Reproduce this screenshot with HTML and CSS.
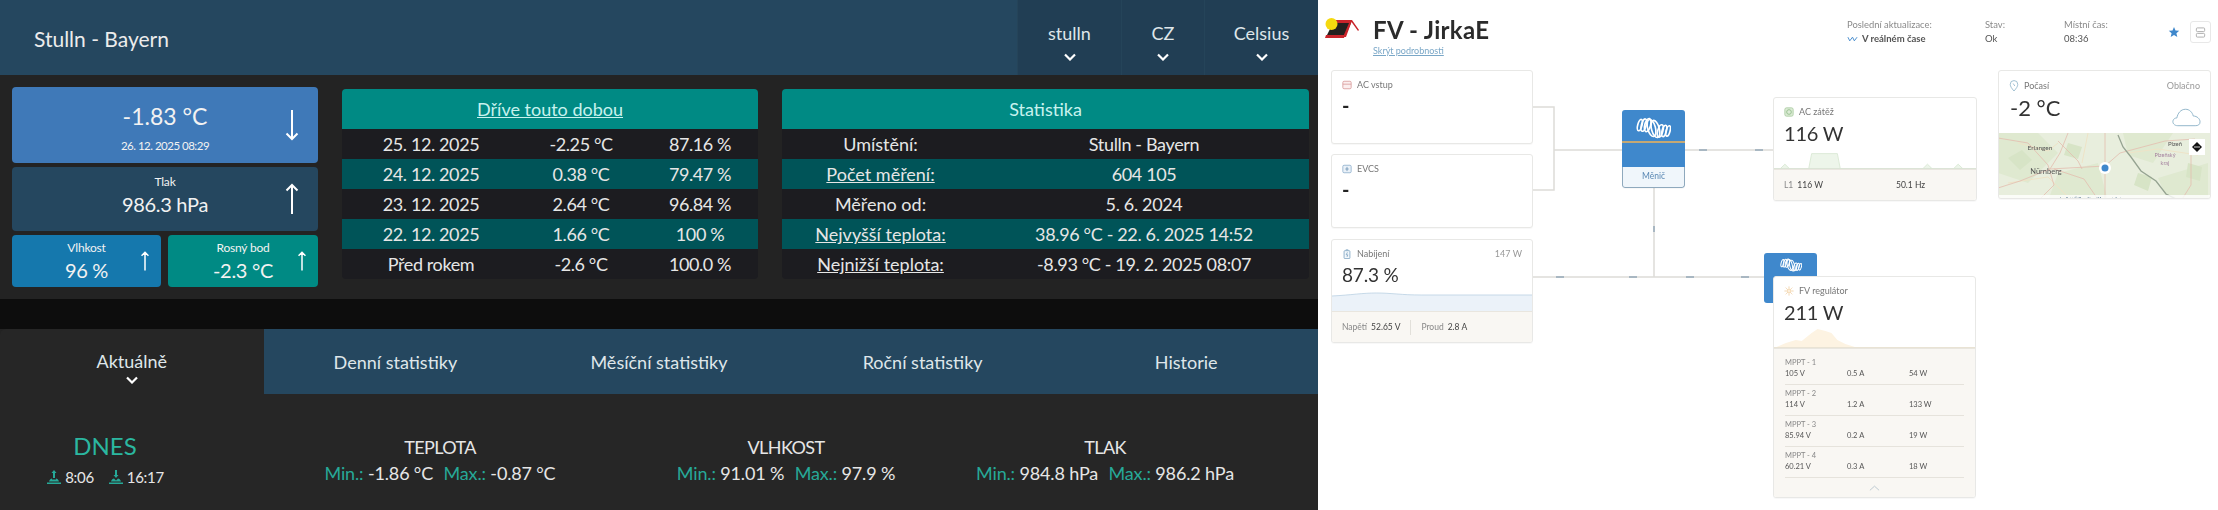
FILE: index.html
```html
<!DOCTYPE html>
<html lang="cs">
<head>
<meta charset="utf-8">
<title>Stulln - Bayern / FV - JirkaE</title>
<link rel="stylesheet" href="styles.css">
</head>
<body>
<div class="page">
  <section class="meteo">
    <header class="top">
      <div class="place">Stulln - Bayern</div>
      <nav class="picks">
        <div class="pick p1">stulln<svg class="chev" viewBox="0 0 12 8"><path d="M1 1.500 6 6.500l5-5"/></svg></div>
        <div class="pick p2">CZ<svg class="chev" viewBox="0 0 12 8"><path d="M1 1.500 6 6.500l5-5"/></svg></div>
        <div class="pick p3">Celsius<svg class="chev" viewBox="0 0 12 8"><path d="M1 1.500 6 6.500l5-5"/></svg></div>
      </nav>
    </header>
    <main class="dash">
      <div class="now">
        <div class="tile temp">
          <div class="tile-text"><div class="big">-1.83 °C</div><div class="date">26. 12. 2025 08:29</div></div>
          <svg class="arrow" viewBox="0 0 14 32"><path d="M7 1v29M1.500 24.500 7 30l5.500-5.500"/></svg>
        </div>
        <div class="tile press">
          <div class="tile-text"><div class="lab">Tlak</div><div class="val">986.3 hPa</div></div>
          <svg class="arrow" viewBox="0 0 14 32"><path d="M7 31V2M1.500 7.500 7 2l5.500 5.500"/></svg>
        </div>
        <div class="tile hum">
          <div class="tile-text"><div class="lab">Vlhkost</div><div class="val">96 %</div></div>
          <svg class="arrow small" viewBox="0 0 14 32"><path d="M7 31V2M1.500 7.500 7 2l5.500 5.500"/></svg>
        </div>
        <div class="tile dew">
          <div class="tile-text"><div class="lab">Rosný bod</div><div class="val">-2.3 °C</div></div>
          <svg class="arrow small" viewBox="0 0 14 32"><path d="M7 31V2M1.500 7.500 7 2l5.500 5.500"/></svg>
        </div>
      </div>
      <table class="grid past">
        <colgroup><col class="c-date"><col class="c-temp"><col class="c-hum"></colgroup>
        <thead><tr><th colspan="3"><u>Dříve touto dobou</u></th></tr></thead>
        <tbody>
          <tr><td>25. 12. 2025</td><td>-2.25 °C</td><td>87.16 %</td></tr>
          <tr><td>24. 12. 2025</td><td>0.38 °C</td><td>79.47 %</td></tr>
          <tr><td>23. 12. 2025</td><td>2.64 °C</td><td>96.84 %</td></tr>
          <tr><td>22. 12. 2025</td><td>1.66 °C</td><td>100 %</td></tr>
          <tr><td>Před rokem</td><td>-2.6 °C</td><td>100.0 %</td></tr>
        </tbody>
      </table>
      <table class="grid stat">
        <colgroup><col class="c-key"><col></colgroup>
        <thead><tr><th colspan="2">Statistika</th></tr></thead>
        <tbody>
          <tr><td>Umístění:</td><td>Stulln - Bayern</td></tr>
          <tr><td><u>Počet měření:</u></td><td>604 105</td></tr>
          <tr><td>Měřeno od:</td><td>5. 6. 2024</td></tr>
          <tr><td><u>Nejvyšší teplota:</u></td><td>38.96 °C - 22. 6. 2025 14:52</td></tr>
          <tr><td><u>Nejnižší teplota:</u></td><td>-8.93 °C - 19. 2. 2025 08:07</td></tr>
        </tbody>
      </table>
    </main>
    <div class="gap"></div>
    <section class="panel">
      <nav class="tabs">
        <div class="tab active">Aktuálně<svg class="chev" viewBox="0 0 12 8"><path d="M1 1.500 6 6.500l5-5"/></svg></div>
        <div class="tab">Denní statistiky</div>
        <div class="tab">Měsíční statistiky</div>
        <div class="tab">Roční statistiky</div>
        <div class="tab">Historie</div>
      </nav>
      <div class="today">
        <div class="col day">
          <div class="dnes">DNES</div>
          <div class="sun">
            <svg class="sunico" viewBox="0 0 16 16"><path d="M8 1 5.500 4H7v5h2V4h1.500zM1 15h14v-1.500H1zM3 12.500h10C12.500 10.500 11 9.500 10 9.500v1H6v-1C5 9.500 3.500 10.500 3 12.500z"/></svg><span>8:06</span>
            <svg class="sunico" viewBox="0 0 16 16"><path d="M8 9 5.500 6H7V1h2v5h1.500zM1 15h14v-1.500H1zM3 12.500h10C12.500 10.500 11 9.500 10 9.500L8 11.500 6 9.500C5 9.500 3.500 10.500 3 12.500z"/></svg><span>16:17</span>
          </div>
        </div>
        <div class="col"><div class="head">TEPLOTA</div><div class="mm"><b>Min.:</b> -1.86 °C <b class="mx">Max.:</b> -0.87 °C</div></div>
        <div class="col"><div class="head">VLHKOST</div><div class="mm"><b>Min.:</b> 91.01 % <b class="mx">Max.:</b> 97.9 %</div></div>
        <div class="col"><div class="head">TLAK</div><div class="mm"><b>Min.:</b> 984.8 hPa <b class="mx">Max.:</b> 986.2 hPa</div></div>
      </div>
    </section>
  </section>

  <section class="fv">
    <header class="fvtop">
      <svg class="logo" viewBox="0 0 34 22">
        <path d="M8 6h18l-6 14H1z" fill="#23201f"/>
        <path d="M6 3h21l7 10-1 1-6.500-9L21 20H18l6-14H8z" fill="#c8242b"/>
        <path d="M1 18h19l-1 3H0z" fill="#c8242b"/>
        <circle cx="6.500" cy="7" r="6" fill="#f5d90f"/>
      </svg>
      <div class="brand"><h1>FV - JirkaE</h1><a class="more">Skrýt podrobnosti</a></div>
      <div class="info"><span>Poslední aktualizace:</span><strong><svg class="wave" viewBox="0 0 12 6"><path d="M1 1l2 4 3-4 2 4 3-4"/></svg>V reálném čase</strong></div>
      <div class="info"><span>Stav:</span><strong>Ok</strong></div>
      <div class="info"><span>Místní čas:</span><strong>08:36</strong></div>
      <svg class="star" viewBox="0 0 24 24"><path d="M12 2l3 7 7.500.6-5.700 4.900 1.800 7.500L12 18l-6.600 4 1.800-7.500L1.500 9.600 9 9z"/></svg>
      <div class="tool"><svg viewBox="0 0 12 12"><rect x="1.500" y="1" width="9" height="4" rx="1"/><rect x="1.500" y="7" width="9" height="4" rx="1"/></svg></div>
    </header>

    <svg class="wires" viewBox="0 0 900 510">
      <path class="w" d="M215 107h21v83h-21"/>
      <path class="w" d="M236 150h68M367 150h88"/>
      <path class="w" d="M336 188v89M215 277h231"/>
      <path class="d" d="M381 150h8M437 150h8M336 226v6M238 277h8M311 277h8M368 277h8M423 277h8"/>
    </svg>

    <article class="node ac-in">
      <div class="chead"><svg class="ico" viewBox="0 0 12 12"><rect x="1" y="1.500" width="10" height="9" rx="1.500" fill="#fbeeee" stroke="#d99a9a"/><path d="M1 5h10" stroke="#d99a9a"/></svg>AC vstup</div>
      <div class="dash-val">-</div>
    </article>
    <article class="node evcs">
      <div class="chead"><svg class="ico" viewBox="0 0 12 12"><rect x="1" y="1.500" width="10" height="9" rx="1.500" fill="#eaf1f8" stroke="#8fb0cc"/><path d="M6 3.500v5M4 6h4" stroke="#6c93b4"/></svg>EVCS</div>
      <div class="dash-val">-</div>
    </article>
    <article class="node batt">
      <div class="chead"><svg class="ico" viewBox="0 0 12 12"><rect x="2.500" y="2" width="7" height="9.500" rx="1" fill="#f2f7fb" stroke="#7fa5c3"/><path d="M4.500 1h3M6.500 4 5 7h2l-1 2.500" stroke="#7fa5c3" fill="none"/></svg>Nabíjení<span class="aside">147 W</span></div>
      <div class="cval">87.3 %</div>
      <svg class="spark" viewBox="0 0 202 24" preserveAspectRatio="none"><path d="M0 9C20 8 30 6 45 6 60 6 70 8 90 8H202V24H0z" fill="#ebf2f9" stroke="none"/><path d="M0 9C20 8 30 6 45 6 60 6 70 8 90 8H202" fill="none" stroke="#c6d9e8"/></svg>
      <div class="foot row">
        <span class="k">Napětí</span><span class="v">52.65 V</span><i class="sep"></i><span class="k">Proud</span><span class="v">2.8 A</span>
      </div>
    </article>

    <article class="node inverter">
      <div class="inv-top">
        <svg class="coil" viewBox="0 0 36 22"><g fill="none" stroke="#fff" stroke-width="1.700"><ellipse cx="4" cy="8" rx="2.200" ry="6" transform="rotate(15 4 8)"/><ellipse cx="8" cy="8" rx="2.400" ry="6.500" transform="rotate(15 8 8)"/><ellipse cx="12" cy="8" rx="3" ry="7" transform="rotate(15 12 8)"/><ellipse cx="16" cy="11" rx="4" ry="9" transform="rotate(-15 16 11)"/><ellipse cx="20" cy="12" rx="4" ry="9" transform="rotate(-15 20 12)"/><ellipse cx="25" cy="14" rx="2.600" ry="6.500" transform="rotate(15 25 14)"/><ellipse cx="29" cy="14" rx="2.200" ry="6" transform="rotate(15 29 14)"/><ellipse cx="33" cy="14" rx="2" ry="5.500" transform="rotate(15 33 14)"/></g></svg>
        <div class="ac-bar"></div>
      </div>
      <div class="inv-name">Měnič</div>
    </article>

    <div class="node-back mppt">
      <svg class="coil small" viewBox="0 0 36 22"><g fill="none" stroke="#fff" stroke-width="1.700"><ellipse cx="4" cy="8" rx="2.200" ry="6" transform="rotate(15 4 8)"/><ellipse cx="8" cy="8" rx="2.400" ry="6.500" transform="rotate(15 8 8)"/><ellipse cx="12" cy="8" rx="3" ry="7" transform="rotate(15 12 8)"/><ellipse cx="16" cy="11" rx="4" ry="9" transform="rotate(-15 16 11)"/><ellipse cx="20" cy="12" rx="4" ry="9" transform="rotate(-15 20 12)"/><ellipse cx="25" cy="14" rx="2.600" ry="6.500" transform="rotate(15 25 14)"/><ellipse cx="29" cy="14" rx="2.200" ry="6" transform="rotate(15 29 14)"/><ellipse cx="33" cy="14" rx="2" ry="5.500" transform="rotate(15 33 14)"/></g></svg>
    </div>

    <article class="node load">
      <div class="chead"><svg class="ico" viewBox="0 0 12 12"><rect x="1" y="1" width="10" height="10" rx="2" fill="#dcebd6" stroke="#a8cba0"/><circle cx="6" cy="6" r="2.800" fill="none" stroke="#8dbb84"/></svg>AC zátěž</div>
      <div class="cval">116 W</div>
      <svg class="spark" viewBox="0 0 204 25" preserveAspectRatio="none"><path d="M6 25l5-5 5 5zM35 25l3-16h26l3 16zM150 25l5-5 5 5zM181 25l5-5 5 5z" fill="#edf5ea" stroke="#dbe9d6"/><path d="M0 24.500H204" stroke="#dbe3d6"/></svg>
      <div class="foot row load-foot"><span class="k">L1</span><span class="v">116 W</span><span class="v hz">50.1 Hz</span></div>
    </article>

    <article class="node solar">
      <div class="chead"><svg class="ico" viewBox="0 0 12 12"><circle cx="6" cy="6" r="2.500" fill="#fdf0dc" stroke="#ecc28c" stroke-width=".8"/><path d="M6 .5v2M6 9.500v2M.5 6h2M9.500 6h2M2 2l1.400 1.400M8.600 8.600 10 10M2 10l1.400-1.400M8.600 3.400 10 2" stroke="#ecc28c" stroke-width=".8"/></svg>FV regulátor</div>
      <div class="cval">211 W</div>
      <svg class="spark" viewBox="0 0 203 24" preserveAspectRatio="none"><path d="M0 24 12 19 22 16 28 17 38 9 44 5 52 7 58 9 64 16 72 20 85 24z" fill="#fdf3e2"/><path d="M0 23.500H203" stroke="#e9e3d4"/></svg>
      <div class="foot mppts">
        <div class="mp"><div class="mp-t">MPPT - 1</div><div class="mp-v"><span>105 V</span><span>0.5 A</span><span>54 W</span></div></div>
        <div class="mp"><div class="mp-t">MPPT - 2</div><div class="mp-v"><span>114 V</span><span>1.2 A</span><span>133 W</span></div></div>
        <div class="mp"><div class="mp-t">MPPT - 3</div><div class="mp-v"><span>85.94 V</span><span>0.2 A</span><span>19 W</span></div></div>
        <div class="mp"><div class="mp-t">MPPT - 4</div><div class="mp-v"><span>60.21 V</span><span>0.3 A</span><span>18 W</span></div></div>
        <svg class="up" viewBox="0 0 12 6"><path d="M1 5.500 6 1l5 4.500"/></svg>
      </div>
    </article>

    <article class="node weather">
      <div class="chead wh"><svg class="ico pin" viewBox="0 0 12 14"><path d="M6 13C3 9.500 1.500 7.500 1.500 5a4.500 4.500 0 0 1 9 0c0 2.500-1.500 4.500-4.500 8z" fill="none" stroke="#8fb4c9"/><path d="M5 4l2 3" stroke="#8fb4c9"/></svg>Počasí<span class="aside">Oblačno</span></div>
      <div class="wbody">
        <div class="wtemp">-2 °C</div>
        <svg class="cloud" viewBox="0 0 30 20"><path d="M6 19C2 19 .5 16 1 14c.500-2 2-3 4-3 1-5 4-9 9-9 4 0 7 3 8 7 4 0 7 3 7 6s-2 4-5 4z" fill="none" stroke="#8fb4c9"/></svg>
      </div>
      <svg class="map" viewBox="0 0 213 68">
        <rect width="213" height="68" fill="#e8eedd"/>
        <path d="M0 0h40l20 20-30 30L0 40zM60 40l40-10 10 38H50zM125 0h50l-20 30-25-8zM160 45l50-15v38h-40z" fill="#dfe9d0"/>
        <path d="M10 25l14-8 10 10-12 10zM70 10l14 4-4 12-14-4zM140 40l14 4-4 14-14-6zM190 30l14 4-2 14-14-4z" fill="#d7e4c6"/>
        <path d="M20 10l30 8 10-8M90 0l-6 30M10 50l40-6 20 20M130 20l30-4 40 6" fill="none" stroke="#eee3c7" stroke-width="1"/>
        <g fill="none" stroke="#e3bcae" stroke-width=".8">
          <path d="M107 0v68M52 36l55-3 15-13 45-12 30-2"/>
          <path d="M0 5l30 5 20 22 6 20-16 16M70 0l-8 20-10 16-30 12L0 55M56 36l30 10 15 22M193 22v30l-10 16M60 8l20 20 4 8"/>
        </g>
        <path d="M120 2l5 12 8 10 10 14 15 10 10 13 12 6" fill="none" stroke="#95a391" stroke-width="1.300"/>
        <g class="mtext">
          <text x="42" y="17" text-anchor="middle" font-size="6.500">Erlangen</text>
          <text x="48" y="41" text-anchor="middle" font-size="7.500">Nürnberg</text>
          <text x="177" y="13" text-anchor="middle" font-size="6">Plzeň</text>
        </g>
        <g class="mkraj"><text x="167" y="24" text-anchor="middle" font-size="5.500">Plzeňský</text><text x="167" y="32" text-anchor="middle" font-size="5.500">kraj</text></g>
        <circle cx="107" cy="35" r="6" fill="#fff"/><circle cx="107" cy="35" r="3.500" fill="#3f88cc"/>
        <rect x="191" y="6" width="16" height="16" fill="#fff"/>
        <path d="M199 9l5 5-5 5-5-5z" fill="#111"/><path d="M196 14h6" stroke="#fff" stroke-width=".8"/>
        <rect y="62" width="213" height="6" fill="#fff" fill-opacity=".8"/>
        <text class="attrib" x="62" y="66.800" font-size="3.800">Leaflet | © OpenStreetMap contributors</text>
      </svg>
    </article>
  </section>
</div>
</body>
</html>
```
FILE: styles.css
```css
* { box-sizing: border-box; }
html, body { margin: 0; padding: 0; background: #fff; }
body { font-family: "Lato", "Noto Sans", sans-serif; }
.page { display: flex; width: 2218px; height: 510px; overflow: hidden; }

/* left: meteo */
.meteo { width: 1318px; flex: none; display: flex; flex-direction: column; background: #232323; color: #e6e6e6; font-size: 18px; }
.top { height: 75px; background: #25475f; display: flex; justify-content: space-between; align-items: stretch; }
.place { font-size: 21px; line-height: 78px; padding-left: 34px; color: #ececec; }
.picks { display: flex; }
.pick { display: flex; flex-direction: column; align-items: center; justify-content: flex-start; padding-top: 20px; background: #213e54; border-left: 1px solid #254459; line-height: 26px; color: #dfe6ea; }
.p1 { width: 104px; } .p2 { width: 83px; } .p3 { width: 114px; }
.chev { width: 12px; height: 8px; margin-top: 7px; fill: none; stroke: #fff; stroke-width: 2.200; }

.dash { height: 224px; display: flex; align-items: flex-start; }
.now { margin: 12px 0 0 12px; width: 306px; display: grid; grid-template-columns: 149px 150px; column-gap: 7px; row-gap: 4px; grid-template-rows: 76px 64px 52px; }
.tile { border-radius: 4px; display: grid; grid-template-columns: 1fr auto 1fr; align-items: center; color: #f2f2f2; text-align: center; }
.tile-text { grid-column: 2; white-space: nowrap; }
.tile .arrow { grid-column: 3; justify-self: end; }
.temp, .press { grid-column: 1 / 3; }
.temp { background: #3f79b8; }
.temp .tile-text { padding-top: 7px; }
.press { background: #25475f; }
.press .tile-text { padding-bottom: 8px; }
.hum { background: #1578ad; }
.dew { background: #008a84; }
.big { font-size: 23px; line-height: 30px; }
.date { font-size: 11.500px; line-height: 20px; margin-top: 5px; letter-spacing: -.5px; }
.lab { font-size: 12px; line-height: 18px; letter-spacing: -.2px; }
.val { font-size: 20px; line-height: 26px; letter-spacing: -.3px; }
.arrow { width: 14px; height: 32px; margin-right: 19px; fill: none; stroke: #fff; stroke-width: 2; }
.arrow.small { height: 20px; width: 10px; margin-right: 11px; stroke-width: 2.400; }

.grid { border-collapse: collapse; table-layout: fixed; margin: 14px 0 0 24px; font-size: 18px; text-align: center; color: #e6e6e6; }
.grid th { height: 40px; background: #008a84; color: #c8f2ee; font-weight: 400; padding: 0; border-radius: 4px 4px 0 0; }
.grid td { height: 30px; padding: 0; background: #1c1c20; white-space: nowrap; }
.grid tbody tr:nth-child(even) td { background: #005458; }
.grid tbody tr:last-child td:first-child { border-radius: 0 0 0 4px; }
.grid tbody tr:last-child td:last-child { border-radius: 0 0 4px 0; }
.past { width: 416px; }
.past td { letter-spacing: -.4px; }
.c-date { width: 178px; } .c-temp { width: 122px; } .c-hum { width: 116px; }
.stat { width: 527px; }
.stat td:last-child { letter-spacing: -.35px; }
.c-key { width: 197px; }

.gap { height: 30px; background: #0d0d0d; }
.panel { flex: 1; background: #262626; border-radius: 6px 0 0 0; margin-top: 0; position: relative; }
.tabs { display: grid; grid-template-columns: repeat(5, 1fr); height: 65px; }
.tab { background: #25475f; display: flex; flex-direction: column; align-items: center; justify-content: center; line-height: 24px; color: #dfe6ea; }
.tab.active { background: transparent; padding-top: 10px; }
.tab .chev { margin-top: 3px; }
.today { display: grid; grid-template-columns: 210px 460px 232px 406px; margin-top: 40px; text-align: center; }
.head { line-height: 26px; color: #e6e6e6; letter-spacing: -.6px; }
.mm { line-height: 26px; white-space: nowrap; color: #e6e6e6; letter-spacing: -.15px; }
.mm b { font-weight: 400; color: #26a998; }
.mm .mx { margin-left: 6px; }
.day { margin-top: -3px; }
.dnes { font-size: 24px; line-height: 30px; color: #2bb7a0; }
.sun { display: flex; justify-content: center; align-items: center; line-height: 26px; margin-top: 3px; font-size: 15px; letter-spacing: -.3px; }
.sunico { width: 16px; height: 16px; fill: #26a998; margin-right: 3px; }
.sun span + .sunico { margin-left: 14px; }

/* right: VRM dashboard */
.fv { flex: 1; position: relative; background: #fff; color: #333; filter: blur(.35px); font-family: "Lato", "Noto Sans", sans-serif; }
.fvtop { display: grid; grid-template-columns: 48px 474px 138px 79px 104px 22px 21px; align-items: start; padding: 17px 0 0 7px; height: 66px; }
.logo { width: 34px; height: 22px; }
.brand h1 { margin: 0; font-size: 24px; line-height: 26px; font-weight: 700; color: #2b2b2b; letter-spacing: .3px; }
.more { display: block; font-size: 9px; line-height: 12px; margin-top: 2px; color: #7aa7c7; text-decoration: underline; }
.info { font-size: 9.400px; line-height: 14px; color: #8a8a8a; padding-top: 1px; }
.info span, .info strong { display: block; white-space: nowrap; }
.info strong { color: #555; font-size: 9.500px; font-weight: 400; display: flex; align-items: center; }
.info:nth-of-type(2) strong { font-weight: 700; }
.wave { width: 11px; height: 6px; margin-right: 4px; fill: none; stroke: #3f88cc; stroke-width: 1; }
.star { width: 12px; height: 12px; fill: #3f88cc; margin-top: 9px; }
.tool { width: 21px; height: 22px; margin-top: 4px; border: 1px solid #e8e8e8; border-radius: 3px; display: flex; align-items: center; justify-content: center; }
.tool svg { width: 11px; height: 11px; fill: none; stroke: #aaa; }

.wires { position: absolute; left: 0; top: 0; width: 900px; height: 510px; }
.wires .w { fill: none; stroke: #dddcd8; stroke-width: 1.500; }
.wires .d { fill: none; stroke: #6d8aa3; stroke-width: 1; }

.node { position: absolute; background: #fff; border: 1px solid #e8e8e6; border-radius: 3px; display: flex; flex-direction: column; overflow: hidden; box-shadow: 0 1px 1px rgba(0,0,0,.03); }
.ac-in { left: 13px; top: 70px; width: 202px; height: 74px; }
.evcs { left: 13px; top: 154px; width: 202px; height: 74px; }
.batt { left: 13px; top: 239px; width: 202px; height: 104px; }
.load { left: 455px; top: 97px; width: 204px; height: 104px; }
.solar { left: 455px; top: 276px; width: 203px; height: 222px; }
.weather { left: 680px; top: 70px; width: 213px; height: 129px; }

.chead { display: flex; align-items: center; font-size: 9px; line-height: 10px; height: 10px; margin: 9px 10px 0; color: #777; gap: 5px; flex: none; }
.ico { width: 10px; height: 10px; flex: none; }
.pin { height: 12px; }
.aside { margin-left: auto; color: #999; }
.dash-val { font-size: 20px; font-weight: 700; line-height: 24px; margin: 3px 0 0 10px; color: #222; }
.cval { font-size: 20px; line-height: 24px; margin: 4px 0 0 10px; color: #333; flex: none; letter-spacing: -.2px; }
.batt .cval { font-size: 19px; }
.spark { display: block; width: 100%; height: 24px; flex: none; }
.foot { flex: 1; background: #f9f7f3; border-top: 1px solid #e9e6df; font-size: 8.500px; color: #444; }
.row { display: flex; align-items: center; padding: 0 10px; gap: 4px; }
.k { color: #888; } .v { color: #444; }
.sep { width: 1px; height: 15px; background: #e2e0da; margin: 0 6px 0 6px; }
.load-foot .hz { margin-left: 69px; }

.mppts { padding: 5px 11px 0; position: relative; }
.mp { padding: 4px 0 5px; border-bottom: 1px solid #e6e3dc; }
.mp-t { font-size: 7.500px; line-height: 10.500px; color: #888; }
.mp-v { display: grid; grid-template-columns: 62px 62px 1fr; font-size: 7.500px; line-height: 10.500px; color: #555; }
.up { display: block; width: 11px; height: 6px; margin: 7px auto 0; fill: none; stroke: #b9c6cf; }

.inverter { left: 304px; top: 110px; width: 63px; height: 78px; background: #f0f6fb; border: 0; }
.inv-top { height: 57px; background: #3f88cc; position: relative; padding-top: 7px; flex: none; }
.coil { display: block; width: 35px; height: 22px; margin: 0 auto; }
.coil.small { width: 22px; height: 14px; margin-top: 5px; }
.ac-bar { position: absolute; left: 0; right: 0; top: 31px; height: 2px; background: #c4a874; }
.inv-name { flex: 1; text-align: center; font-size: 8.500px; line-height: 19px; color: #5a88b4; border: 1px solid #8fa9bd; border-top: 0; border-radius: 0 0 3px 3px; }
.node-back { position: absolute; }
.mppt { left: 446px; top: 253px; width: 53px; height: 50px; background: #3f88cc; border-radius: 3px; }

.wh { margin-top: 10px; }
.wbody { display: flex; justify-content: space-between; padding: 3px 9px 0 11px; height: 42px; flex: none; }
.wtemp { font-size: 22px; line-height: 28px; color: #333; }
.cloud { width: 29px; height: 20px; margin-top: 13px; }
.map { display: block; width: 213px; height: 68px; flex: none; margin-left: -1px; }
.mtext { fill: #555; }
.mkraj { fill: #a5829f; }
.attrib { fill: #33597c; }
```
